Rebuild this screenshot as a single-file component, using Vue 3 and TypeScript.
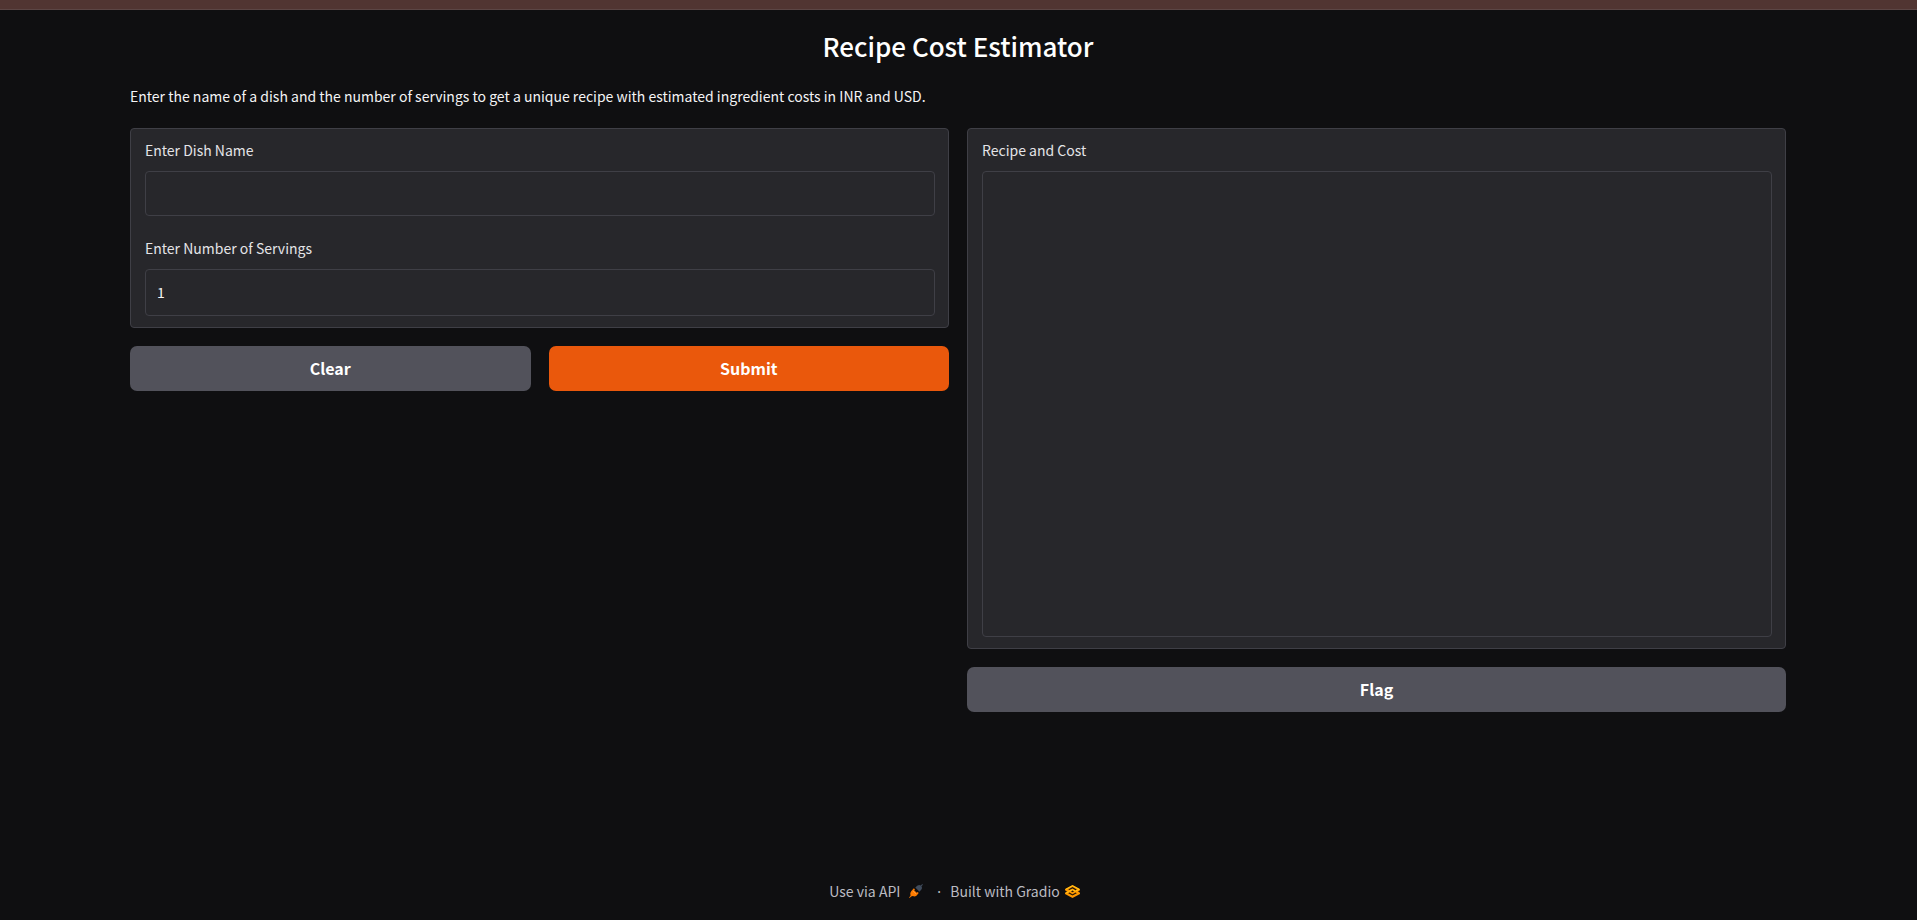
<script setup lang="ts">
import { ref } from 'vue'

const dish = ref('')
const servings = ref(1)
const recipe = ref('')

function clearForm(): void {
  dish.value = ''
  servings.value = 1
  recipe.value = ''
}
</script>

<template>
  <div class="page">
    <div class="strip"></div>
    <main class="content">
      <h1>Recipe Cost Estimator</h1>
      <p class="intro">
        Enter the name of a dish and the number of servings to get a unique recipe with estimated ingredient costs in INR and USD.
      </p>
      <form class="columns" @submit.prevent>
        <div class="column">
          <div class="panel">
            <div class="field">
              <label for="dish">Enter Dish Name</label>
              <input id="dish" v-model="dish" class="box" type="text" />
            </div>
            <div class="field">
              <label for="servings">Enter Number of Servings</label>
              <input id="servings" v-model.number="servings" class="box number" type="number" />
            </div>
          </div>
          <div class="actions">
            <button type="button" @click="clearForm">Clear</button>
            <button type="submit" class="primary">Submit</button>
          </div>
        </div>
        <div class="column">
          <div class="panel">
            <div class="field">
              <label for="recipe">Recipe and Cost</label>
              <textarea id="recipe" v-model="recipe" class="box output" rows="19" readonly></textarea>
            </div>
          </div>
          <div class="actions">
            <button type="button">Flag</button>
          </div>
        </div>
      </form>
    </main>
    <footer>
      <a href="#api">
        Use via API
        <svg class="rocket" viewBox="0 0 14 14" aria-hidden="true">
          <path d="M6.300 3.600 8.500 1.500Q10.400 .3 11.700 1.500L13.300.1 13.900.7 12.500 2.300Q13.700 4 12.400 5.600L10.400 7.700Z" fill="#3f4b5c" />
          <path d="M4.900 4.300 6 5.400 5.200 6.300 7.700 8.800 8.700 8 9.700 9 8.500 10.500Q6.800 13.200 3.800 12.100L2.200 12.400.6 13.900.1 13.400 1.500 11.700Q.6 8.900 2.400 7.100Z" fill="#ff7c00" />
          <path d="M4 7 7 10" stroke="#ffa94d" stroke-width=".7" />
        </svg>
      </a>
      <span class="dot">·</span>
      <a href="#gradio">
        Built with Gradio
        <svg class="mark" viewBox="0 0 15 13" aria-hidden="true">
          <path d="M7.500 0 15 4V5.300L13 6.500 15 7.700V9L7.500 13 0 9V7.700L2 6.500 0 5.300V4Z" fill="#ff9800" />
          <path d="M1 4.200 7.500.8 14 4.200 10.500 6.200M1 8.200 4.500 6.200 7.500 4.700 10.500 6.200" fill="none" stroke="#ffc61a" stroke-width="1" />
          <path d="M3.200 4.400 7.500 2.100 11.800 4.400 10.500 5.200 7.500 3.500 4.400 5.100ZM3.200 8.300 4.500 7.500 7.500 9.200 10.600 7.500 11.800 8.300 7.500 10.600ZM6 6.400 7.500 5.600 9 6.400 7.500 7.200Z" fill="#241708" />
        </svg>
      </a>
    </footer>
  </div>
</template>

<style>
body {
  margin: 0;
  background: #0f0f11;
}
</style>

<style scoped>
.page {
  box-sizing: border-box;
  display: flex;
  flex-direction: column;
  min-height: 100vh;
  background: #0f0f11;
  color: #f4f4f5;
  font-family: "Noto Sans CJK JP", "Noto Sans", sans-serif;
  font-size: 14px;
  line-height: 24px;
}

.strip {
  box-sizing: border-box;
  height: 10px;
  background: #513532;
  border-bottom: 1px solid #5c4645;
}

.content {
  flex: 1;
  padding: 17px 131px 0 130px;
}

h1 {
  margin: 0 0 19px;
  color: #fff;
  font-size: 26px;
  font-weight: 500;
  line-height: 38px;
  text-align: center;
}

.intro {
  margin: 0 0 20px;
}

.columns {
  display: grid;
  grid-template-columns: 1fr 1fr;
  align-items: start;
  gap: 18px;
}

.column {
  display: flex;
  flex-direction: column;
  gap: 18px;
}

.panel {
  display: flex;
  flex-direction: column;
  gap: 20px;
  padding: 9px 13px 11px 14px;
  border: 1px solid #3f3f46;
  border-radius: 4px;
  background: #27272b;
}

.field {
  display: flex;
  flex-direction: column;
  gap: 9px;
}

label {
  color: #e4e4e7;
}

.box {
  box-sizing: border-box;
  width: 100%;
  height: 45px;
  margin: 0;
  padding: 9px 11px 10px;
  border: 1px solid #3f3f46;
  border-radius: 4px;
  outline: none;
  background: #27272b;
  color: #f4f4f5;
  font: inherit;
  resize: none;
}

.number {
  height: 47px;
  appearance: textfield;
}

.output {
  height: 466px;
}

.actions {
  display: flex;
  gap: 18px;
}

button {
  flex: 1;
  height: 45px;
  padding: 0 0 1px;
  border: 0;
  border-radius: 7px;
  background: #52525b;
  color: #fff;
  font: inherit;
  font-size: 16px;
  font-weight: 700;
}

.primary {
  background: #ea580c;
}

footer {
  display: flex;
  justify-content: center;
  align-items: center;
  padding: 0 8px 17px 0;
  color: #bbbbc2;
}

footer a {
  display: flex;
  align-items: center;
  color: inherit;
  text-decoration: none;
}

.rocket {
  width: 14px;
  height: 14px;
  margin-left: 9px;
}

.dot {
  margin: 0 7px 0 12px;
}

.mark {
  width: 15px;
  height: 13px;
  margin-left: 5px;
}
</style>
